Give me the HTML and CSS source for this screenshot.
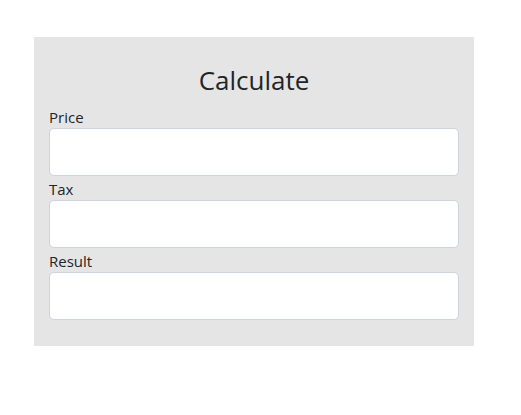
FILE: index.html
```html
<!DOCTYPE html>
<html>
<head>
<meta charset="utf-8">
<link rel="stylesheet" href="styles.css">
</head>
<body>
<div class="page">
  <form class="panel">
    <h2 class="title">Calculate</h2>
    <label class="label" for="price">Price</label>
    <input class="field" id="price" type="text">
    <label class="label" for="tax">Tax</label>
    <input class="field" id="tax" type="text">
    <label class="label" for="result">Result</label>
    <input class="field" id="result" type="text">
  </form>
</div>
</body>
</html>
```
FILE: styles.css
```css
* { box-sizing: border-box; }
html, body { margin: 0; padding: 0; background: #fff; }
body {
  font-family: "Open Sans", "Noto Sans", sans-serif;
  color: #212529;
}
.page {
  padding: 37px 0 0 34px;
}
.panel {
  width: 440px;
  background: #e5e5e5;
  padding: 15px 15px 26px 15px;
  display: flex;
  flex-direction: column;
}
.title {
  margin: 8px 0 4px 0;
  height: 40px;
  line-height: 40px;
  font-size: 26px;
  font-weight: 400;
  text-align: center;
}
.label {
  display: block;
  height: 24px;
  line-height: 26px;
  font-size: 15px;
}
.field {
  display: block;
  width: 100%;
  height: 48px;
  margin: 0;
  border: 1px solid #ced4da;
  border-radius: 5px;
  background: #fff;
  font: inherit;
}
```
